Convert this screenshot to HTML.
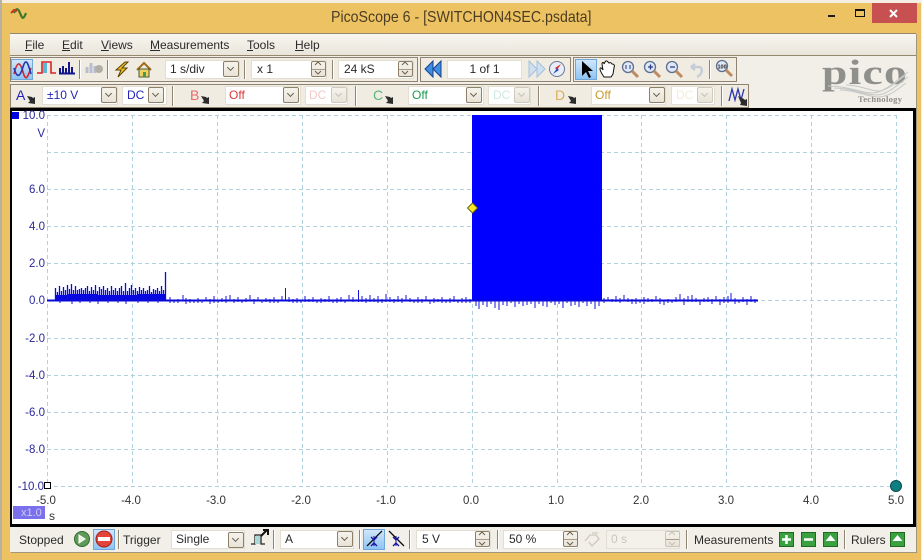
<!DOCTYPE html>
<html><head><meta charset="utf-8"><style>
html,body{margin:0;padding:0}
body{width:922px;height:560px;position:relative;overflow:hidden;background:#edc263;font-family:"Liberation Sans",sans-serif;font-size:12px;color:#2a2a2a}
.a{position:absolute;box-sizing:border-box}
.t{position:absolute;white-space:nowrap;line-height:14px}
.box{position:absolute;box-sizing:border-box;background:#fff;border:1px solid #e2ded2;height:19px;line-height:17px;padding-left:4px;white-space:nowrap}
.btn{position:absolute;box-sizing:border-box;width:16px;height:16px;border:1px solid #8d7f68;border-radius:2px;background:linear-gradient(#f6f3ec,#e8e3d7)}
.btn:after{content:"";position:absolute;left:4px;top:3px;width:4px;height:4px;border-right:1px solid #6a5f4f;border-bottom:1px solid #6a5f4f;transform:rotate(45deg)}
.btn.d{border-color:#cfcabd}.btn.d:after{border-color:#c4c0b5}
.spin{position:absolute;box-sizing:border-box;width:15px;height:16px;border:1px solid #8d7f68;border-radius:2px;background:linear-gradient(#f6f3ec,#e8e3d7);font-size:0}
.spin:before{content:"";position:absolute;left:0;right:0;top:7px;border-top:1px solid #a89c88}
.sep{position:absolute;width:1px;background:#8f8572;box-shadow:1px 0 #fff}
.grp{position:absolute;box-sizing:border-box;border:1px solid #8f8270}
.sel{position:absolute;box-sizing:border-box;border:1px solid #6fa7d8;background:linear-gradient(#cfe6fa,#8fc4f3)}
svg{position:absolute;left:0;top:0;overflow:visible}
</style></head><body>
<div class="a" style="left:0;top:0;width:922px;height:3px;background:#f3eee1"></div>
<div class="a" style="left:0;top:0;width:2px;height:560px;background:#b9b1a0"></div>
<div class="a" style="left:921px;top:0;width:1px;height:560px;background:#f4efe4"></div>

<div class="t" style="left:331px;top:9px;font-size:16px;line-height:18px;color:#4b3d22;transform:scaleX(.885);transform-origin:0 0">PicoScope 6 - [SWITCHON4SEC.psdata]</div>
<div class="a" style="left:872px;top:3px;width:45px;height:20px;background:#c75050"></div>

<div class="a" style="left:10px;top:33px;width:906px;height:519px;background:#f2efe8;box-shadow:1px 1px 0 #a09680"></div>
<div class="a" style="left:10px;top:33px;width:906px;height:23px;border:1px solid #94876d;border-width:1px 0;background:linear-gradient(#f8f6f0,#e9e5da)"></div>
<div class="t" style="left:25px;top:38px"><u>F</u>ile</div>
<div class="t" style="left:62px;top:38px"><u>E</u>dit</div>
<div class="t" style="left:101px;top:38px"><u>V</u>iews</div>
<div class="t" style="left:150px;top:38px"><u>M</u>easurements</div>
<div class="t" style="left:247px;top:38px"><u>T</u>ools</div>
<div class="t" style="left:295px;top:38px"><u>H</u>elp</div>

<!-- row 1 -->
<div class="grp" style="left:10px;top:57px;width:408px;height:25px;background:#f0ece2"></div>
<div class="grp" style="left:420px;top:57px;width:151px;height:25px;background:#f0ece2"></div>
<div class="grp" style="left:573px;top:57px;width:164px;height:25px;background:#f0ece2"></div>
<div class="sel" style="left:11px;top:59px;width:22px;height:21px"></div>
<div class="sep" style="left:79px;top:60px;height:19px"></div>
<div class="sep" style="left:107px;top:60px;height:19px"></div>
<div class="sep" style="left:244px;top:60px;height:19px"></div>
<div class="sep" style="left:332px;top:60px;height:19px"></div>
<div class="box" style="left:165px;top:60px;width:75px">1 s/div<div class="btn" style="left:57px;top:0"></div></div>
<div class="box" style="left:251px;top:60px;width:76px;padding-left:5px">x 1<div class="spin" style="left:59px;top:0"></div></div>
<div class="box" style="left:338px;top:60px;width:76px;padding-left:5px">24 kS<div class="spin" style="left:59px;top:0"></div></div>
<div class="box" style="left:447px;top:60px;width:75px;text-align:center;padding:0">1 of 1</div>
<div class="sel" style="left:575px;top:59px;width:22px;height:21px"></div>
<div class="sep" style="left:709px;top:60px;height:19px"></div>

<!-- row 2 -->
<div class="grp" style="left:10px;top:84px;width:739px;height:24px;background:#f0ece2"></div>
<div class="t" style="left:16px;top:88px;font-size:14px;color:#2222c0">A</div>
<div class="box" style="left:42px;top:86px;width:76px;color:#2525b5">±10 V<div class="btn" style="left:58px;top:0"></div></div>
<div class="box" style="left:122px;top:86px;width:45px;color:#2525b5">DC<div class="btn" style="left:25px;top:0"></div></div>
<div class="sep" style="left:172px;top:86px;height:20px"></div>
<div class="t" style="left:190px;top:88px;font-size:14px;color:#e86a6a">B</div>
<div class="box" style="left:225px;top:86px;width:76px;color:#d93a3a;padding-left:3px">Off<div class="btn" style="left:57px;top:0"></div></div>
<div class="box" style="left:305px;top:86px;width:43px;color:#f2c9c9;padding-left:3px">DC<div class="btn d" style="left:25px;top:0"></div></div>
<div class="sep" style="left:355px;top:86px;height:20px"></div>
<div class="t" style="left:373px;top:88px;font-size:14px;color:#58b878">C</div>
<div class="box" style="left:408px;top:86px;width:76px;color:#1e9a50;padding-left:3px">Off<div class="btn" style="left:57px;top:0"></div></div>
<div class="box" style="left:488px;top:86px;width:43px;color:#cfe8e0">DC<div class="btn d" style="left:25px;top:0"></div></div>
<div class="sep" style="left:538px;top:86px;height:20px"></div>
<div class="t" style="left:555px;top:88px;font-size:14px;color:#dcae5c">D</div>
<div class="box" style="left:591px;top:86px;width:75px;color:#c9972f;padding-left:3px">Off<div class="btn" style="left:57px;top:0"></div></div>
<div class="box" style="left:671px;top:86px;width:44px;color:#f3ecd8">DC<div class="btn d" style="left:25px;top:0"></div></div>
<div class="sep" style="left:721px;top:86px;height:20px"></div>

<!-- logo -->
<div class="t" style="left:822px;top:55px;font-family:'Liberation Serif',serif;font-weight:bold;font-size:35px;line-height:36px;color:#8f8f8b;letter-spacing:1px;transform:scaleX(1.3);transform-origin:0 0">pico</div>
<div class="t" style="left:858px;top:94px;font-family:'Liberation Serif',serif;font-size:8.500px;line-height:10px;color:#8c8c88;letter-spacing:.3px;font-weight:bold">Technology</div>

<!-- plot -->
<div class="a" style="left:10px;top:108px;width:906px;height:419px;background:#fff;border:3px solid #000;border-width:3px 3px 3px 2px"></div>

<!-- bottom bar -->
<div class="t" style="left:19px;top:533px">Stopped</div>
<div class="sel" style="left:93px;top:529px;width:22px;height:21px"></div>
<div class="sep" style="left:118px;top:530px;height:19px"></div>
<div class="t" style="left:123px;top:533px">Trigger</div>
<div class="box" style="left:171px;top:530px;width:74px">Single<div class="btn" style="left:56px;top:1px"></div></div>
<div class="sep" style="left:273px;top:530px;height:19px"></div>
<div class="box" style="left:280px;top:530px;width:74px">A<div class="btn" style="left:56px;top:0"></div></div>
<div class="sep" style="left:359px;top:530px;height:19px"></div>
<div class="sel" style="left:363px;top:529px;width:22px;height:21px"></div>
<div class="sep" style="left:409px;top:530px;height:19px"></div>
<div class="box" style="left:416px;top:530px;width:75px;padding-left:5px">5 V<div class="spin" style="left:58px;top:0"></div></div>
<div class="sep" style="left:497px;top:530px;height:19px"></div>
<div class="box" style="left:503px;top:530px;width:75px;padding-left:5px">50 %<div class="spin" style="left:59px;top:0"></div></div>
<div class="box" style="left:606px;top:530px;width:74px;color:#c8c5bc;background:#f3f1ea">0 s<div class="spin" style="left:58px;top:0;border-color:#c9c4b8"></div></div>
<div class="sep" style="left:686px;top:530px;height:19px"></div>
<div class="t" style="left:694px;top:533px">Measurements</div>
<div class="sep" style="left:844px;top:530px;height:19px"></div>
<div class="t" style="left:851px;top:533px">Rulers</div>

<svg width="922" height="560" viewBox="0 0 922 560" font-family="Liberation Sans, sans-serif">
<!-- window glyphs -->
<path d="M14 13c2-5 4-5 6 0s3 8 6 0" fill="none" stroke="#3a7a2a" stroke-width="2.2"/>
<path d="M11 13l3-3 3 1" fill="none" stroke="#c83a20" stroke-width="2"/>
<rect x="828" y="15" width="7" height="2" fill="#1c1c1c"/>
<rect x="855.500" y="9.500" width="9" height="7" fill="none" stroke="#111" stroke-width="1"/><path d="M855 10h10" stroke="#111" stroke-width="2"/>
<path d="M890 10l7 7M897 10l-7 7" stroke="#fff" stroke-width="2"/>

<!-- row1 icons -->
<path d="M14 74c3-13 6-13 9-2s5 4 8-4" fill="none" stroke="#d8232a" stroke-width="1.6"/>
<path d="M14 68c3 11 6 9 9-1s5-4 8 7" fill="none" stroke="#2a35b0" stroke-width="1.6"/>
<path d="M37 73h5V62h9v11h5" fill="none" stroke="#d8232a" stroke-width="1.6"/><rect x="43" y="63" width="4" height="10" fill="#58b8d8"/>
<path d="M59 73.500h16M60 73V68M63 73V66M66 73V68M69 73V62M72 73V67" stroke="#14148e" stroke-width="2" fill="none"/>
<path d="M87 73V67M91 73V63M95 73V66" stroke="#b9bdd0" stroke-width="3"/><circle cx="99" cy="69" r="4" fill="#b0aea8"/>
<path d="M125 62l-9 8h5l-3 7 9-9h-5l6-6z" fill="#f0c020" stroke="#5a4208" stroke-width="1"/>
<path d="M137 70l7-7 7 7" fill="none" stroke="#a06a18" stroke-width="2"/><rect x="139" y="69" width="10" height="8" fill="#f0d060" stroke="#40603a"/><rect x="143" y="72" width="3" height="5" fill="#4a9a4a"/>
<!-- spinners -->
<path d="M315 65l3-3 3 3M315 71l3 3 3-3M402 65l3-3 3 3M402 71l3 3 3-3M479 535l3-3 3 3M479 542l3 3 3-3M567 535l3-3 3 3M567 542l3 3 3-3" fill="none" stroke="#6a5f4f"/>
<path d="M669 535l3-3 3 3M669 542l3 3 3-3" fill="none" stroke="#c4c0b5"/>
<!-- nav -->
<path d="M433 61l-8 8 8 8zM441 61l-8 8 8 8z" fill="#3f8ee0" stroke="#163f90"/>
<path d="M529 61l8 8-8 8zM537 61l8 8-8 8z" fill="#cfe0f0" stroke="#a6c0dc"/>
<circle cx="557" cy="69" r="7.500" fill="#e8eef8" stroke="#6b7690"/><path d="M561 64l-6 4 2 2z" fill="#d83030"/><path d="M553 74l4-6 2 2z" fill="#3050c0"/>
<path d="M582 61v15l4-4 3 6 2-1-3-6h5z" fill="#000"/>
<path d="M604 77c-2-3-4-6-4-8s2-1 3 1l-1-6c0-2 2-2 2 0l1-2c1-2 2-1 3 0l1 1c2-1 2 0 3 1 2 0 3 1 2 4l-1 6-2 3z" fill="#fff" stroke="#111"/>
<g fill="#dfe8f6" stroke="#5f6f90" stroke-width="1.3"><circle cx="628" cy="67" r="5.500"/><circle cx="650" cy="67" r="5.500"/><circle cx="672" cy="67" r="5.500"/><circle cx="722" cy="66" r="5.500"/></g>
<path d="M632 71l6 6M654 71l6 6M676 71l6 6M726 70l6 6" stroke="#c08a60" stroke-width="3"/>
<path d="M648 67h5M650.500 64.500v5M670 67h5" stroke="#2a3a80" stroke-width="1.3"/>
<path d="M626 65v4M630 65v4" stroke="#2a3a80"/>
<text x="717.500" y="68.500" font-size="5.500" font-weight="bold" fill="#222">100</text>
<path d="M691 67h8c4 0 4 7-2 10M691 67l4-3M691 67l4 3" fill="none" stroke="#c6cdd8" stroke-width="2.500"/>

<!-- pointer glyphs row2 -->
<g fill="#2c2c2c"><path d="M27 96l5 1 1 1 2-1v7l-7-1 2-2zM201 96l5 1 1 1 2-1v7l-7-1 2-2zM385 96l5 1 1 1 2-1v7l-7-1 2-2zM568 96l5 1 1 1 2-1v7l-7-1 2-2z"/></g>
<path d="M729 101l3-12 3 11 3-11 3 11 3-11" fill="none" stroke="#2a35b0" stroke-width="1.3"/><path d="M738 96l6 3 1 1 2-1v7l-7-1 1-2z" fill="#2c2c2c"/>

<!-- logo swoosh -->
<path d="M828 86c20 0 34 7 44 7 12 0 24-12 36-21M834 88c18 0 30 7 42 7 12 0 22-11 32-18M840 90c16 0 28 7 38 7 11 0 20-8 28-14M846 85c14 0 24 6 32 6 9 0 18-9 28-16" fill="none" stroke="#c6c8c6" stroke-width="1"/>

<!-- grid -->
<g stroke="#b0d2de" stroke-width="1" stroke-dasharray="4 3" fill="none">
<path d="M47 115.500H896M47 152.500H896M47 189.500H896M47 226.500H896M47 263.500H896M47 300.500H896M47 338.500H896M47 375.500H896M47 412.500H896M47 449.500H896M47 486.500H896"/>
<path d="M47.500 115V486M132.500 115V486M217.500 115V486M302.500 115V486M387.500 115V486M472.500 115V486M557.500 115V486M641.500 115V486M726.500 115V486M811.500 115V486M896.500 115V486"/>
</g>

<!-- trace -->
<rect x="472" y="115" width="130" height="186" fill="#0000ff"/>
<path d="M56 301V295h12v-1h30v1h40v-1h27v7z" fill="#0808e0"/>
<path d="M47 300.500H758" stroke="#0808d8" stroke-width="2"/>
<path stroke="#0808e0" stroke-width="1.300" fill="none" d="M55.500 288V301M57.500 292V301M59.500 286V301M61.500 291V301M63.500 287V301M65.500 290V301M67.500 285V301M69.500 289V301M71.500 284V301M73.500 290V301M75.500 286V301M77.500 290V301M79.500 289V301M81.500 288V301M83.500 290V301M85.500 288V301M87.500 286V301M89.500 291V301M91.500 287V301M93.500 290V301M95.500 285V301M97.500 291V301M99.500 287V301M101.500 289V301M103.500 286V301M105.500 290V301M107.500 288V301M109.500 291V301M111.500 286V301M113.500 290V301M115.500 288V301M117.500 291V301M119.500 288V301M121.500 286V301M123.500 291V301M125.500 283V301M127.500 291V301M129.500 288V301M131.500 285V301M133.500 290V301M135.500 288V301M137.500 291V301M139.500 287V301M141.500 290V301M143.500 288V301M145.500 291V301M147.500 290V301M149.500 286V301M151.500 292V301M153.500 289V301M155.500 290V301M157.500 288V301M159.500 291V301M161.500 286V301M163.500 290V301M165.500 272V301"/>
<path stroke="#1414d8" stroke-width="1" fill="none" d="M60 300v3M72 300v4M80 300v3M90 300v3M98 300v4M108 300v3M118 300v3M126 300v4M138 300v3M148 300v3M158 300v3
M170 297v6M174 300v3M178 299v4M183 295v6M186 298v6M190 299v4M194 300v3M198 298v5M202 300v3M206 297v4M210 299v5M214 296v7M218 300v3M222 298v4M226 296v7M230 295v6M234 299v4M238 297v5M242 300v3M246 298v4M250 295v6M254 299v5M258 297v4M262 300v3M266 298v4M270 299v4M274 297v6M278 300v3M282 296v5M285.500 288v13M289 297v5M293 299v4M297 298v5M301 300v3M305 296v6M309 299v3M313 297v5M317 300v3M321 298v5M325 299v3M329 296v6M333 300v3M337 298v5M341 297v5M345 300v3M349 295v6M353 297v5M358.500 290v12M362 296v6M366 298v5M370 295v7M374 298v4M378 296v7M382 299v4M386 294v8M390 297v5M394 299v4M398 296v6M402 298v5M406 295v6M410 298v4M414 300v3M418 297v6M422 299v4M426 296v5M430 300v4M434 298v5M438 299v3M442 297v6M446 300v3M450 298v5M454 296v6M458 300v3M462 298v5M466 297v6M470 299v4
M476 300v6M479 300v9M483 300v5M487 300v7M491 300v4M495 300v8M499 300v10M503 300v5M507 300v6M511 300v3M515 300v7M519 300v4M523 300v6M527 300v5M531 300v4M535 300v8M539 300v4M543 300v6M547 300v7M551 300v3M555 300v5M559 300v4M563 300v8M567 300v3M571 300v6M575 300v5M579 300v7M583 300v3M587 300v6M591 300v4M595 300v9M599 300v6
M604 298v5M608 297v4M612 299v3M616 296v6M620 298v5M624 295v6M628 298v4M632 299v5M636 298v6M640 300v3M644 297v7M648 298v4M652 299v3M656 296v5M660 298v6M664 300v5M668 299v4M672 300v3M676 297v5M680 294v6M684 298v7M688 296v6M692 295v7M696 298v4M700 300v5M704 298v4M708 297v5M712 299v5M716 296v5M720 299v6M724 297v6M728 296v7M731 293v7M735 298v6M739 300v3M743 297v5M747 299v6M751 296v6M755 299v4"/>

<!-- markers -->
<rect x="12" y="112" width="7" height="7" fill="#0000e0"/>
<rect x="44.500" y="482.500" width="6" height="6" fill="#fff" stroke="#000"/>
<path d="M472.500 203l5 5-5 5-5-5z" fill="#f8e820" stroke="#6b6420"/>
<circle cx="896" cy="486" r="5.500" fill="#0e7f80" stroke="#0a4a50"/>
<rect x="13" y="506" width="32" height="13" fill="#7b70ec"/>
<text x="21" y="516" font-size="11" fill="#cfcaf5">x1.0</text>
<text x="49" y="520" font-size="12" fill="#333">s</text>

<g font-size="11.500" fill="#2a2a9a" text-anchor="end">
<text x="45" y="119">10.0</text><text x="45" y="137">V</text><text x="45" y="193">6.0</text><text x="45" y="230">4.0</text><text x="45" y="267">2.0</text><text x="45" y="304">0.0</text><text x="45" y="342">-2.0</text><text x="45" y="379">-4.0</text><text x="45" y="416">-6.0</text><text x="45" y="453">-8.0</text><text x="44" y="490">-10.0</text>
</g>
<g font-size="11.500" fill="#333" text-anchor="middle">
<text x="46" y="504">-5.0</text><text x="131" y="504">-4.0</text><text x="216" y="504">-3.0</text><text x="301" y="504">-2.0</text><text x="386" y="504">-1.0</text><text x="471" y="504">0.0</text><text x="556" y="504">1.0</text><text x="641" y="504">2.0</text><text x="726" y="504">3.0</text><text x="811" y="504">4.0</text><text x="896" y="504">5.0</text>
</g>

<!-- bottom icons -->
<circle cx="82" cy="539" r="7.500" fill="#5f9a58" stroke="#2f6a30"/><path d="M79 535v8l6-4z" fill="#e8f2e0" stroke="#fff"/>
<circle cx="104" cy="539" r="8" fill="#e2463a" stroke="#a82018"/><rect x="98" y="537" width="12" height="4" fill="#fff"/>
<path d="M251 544h4v-9h6v9h4" fill="none" stroke="#222" stroke-width="1.300"/><path d="M261 536l6-6M263 530h5v5" fill="none" stroke="#111" stroke-width="2"/><rect x="255" y="536" width="5" height="8" fill="#a8d8d8"/>
<path d="M367 546l15-15" stroke="#111" stroke-width="1.300"/><path d="M371 537l3 3 3-3M371 546l3-3 3 3" fill="none" stroke="#1414a0" stroke-width="1.300"/><path d="M374 536v10" stroke="#1414a0"/>
<path d="M389 531l15 15" stroke="#111" stroke-width="1.300"/><path d="M393 537l3 3 3-3M393 546l3-3 3 3" fill="none" stroke="#1414a0" stroke-width="1.300"/><path d="M396 536v10" stroke="#1414a0"/>
<path d="M585 541l5-6h6l3 4-7 7-3-4M592 533h6" fill="none" stroke="#cdc9be" stroke-width="1.300"/>
<g stroke="#206a20"><rect x="779.500" y="532.500" width="14" height="14" fill="#3aa040"/><rect x="801.500" y="532.500" width="14" height="14" fill="#3aa040"/><rect x="823.500" y="532.500" width="14" height="14" fill="#3aa040"/><rect x="890.500" y="532.500" width="14" height="14" fill="#3aa040"/></g>
<path d="M786.500 535v9M782 539.500h9M804 539.500h9" stroke="#fff" stroke-width="2.500"/>
<path d="M830.500 535l5 6h-10zM897.500 535l5 6h-10z" fill="#fff"/>
</svg>
</body></html>
